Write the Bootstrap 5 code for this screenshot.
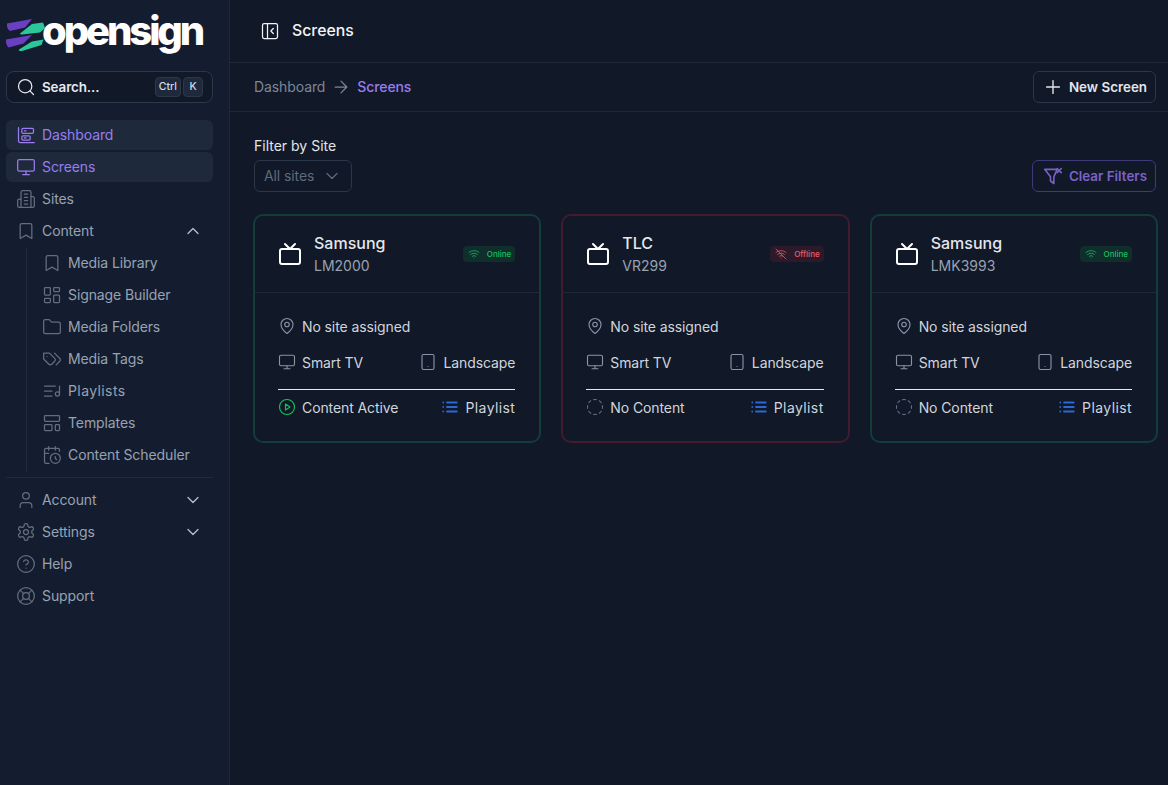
<!DOCTYPE html>
<html lang="en">
<head>
<meta charset="utf-8">
<title>Screens</title>
<link href="https://cdn.jsdelivr.net/npm/bootstrap@5.3.0/dist/css/bootstrap.min.css" rel="stylesheet">
<style>
html,body{height:100%}
body{background:#111827;font-family:"Inter","Noto Sans",sans-serif;font-size:14px;letter-spacing:-.1px;color:#e2e6ec;overflow:hidden}
svg.ico{fill:none;stroke:currentColor;stroke-width:1.5;stroke-linecap:round;stroke-linejoin:round;flex:none}
.shell{height:785px}
.side{width:230px;flex:none;background:#141d2f;border-right:1px solid #1f2937;padding:0 16px 0 6px}
.brand{height:71px;position:relative;color:#fff}
.brand-word{font-family:"Inter",sans-serif;font-weight:800;font-size:40px;letter-spacing:-3.1px;line-height:1;position:absolute;left:36px;top:11px}
.brand-mark{position:absolute;left:-6px;top:0}
.searchbox{height:32px;border:1px solid #2c3749;border-radius:8px;background:#111827;padding:0 9px;margin-bottom:17px;color:#e6e9ee;font-weight:600;font-size:13.4px;gap:6px}
.keyset{gap:2px}
.keycap{height:20px;border:1px solid #2c3749;background:#1e293b;border-radius:4px;font-size:10.5px;font-weight:500;letter-spacing:0;padding:0 3px;min-width:20px;color:#d5dae2;display:flex;align-items:center;justify-content:center}
.nav-row{height:30px;margin-bottom:2px;border-radius:6px;padding:0 10px;color:#98a2b3;gap:6px;font-size:14px}
.nav-row>svg:first-child{color:#626e80}
.nav-row.on{background:#1e293b;color:#9a7cf0}
.nav-row.on>svg:first-child{color:#9a7cf0}
.nav-row .txt{flex:1;margin-bottom:2px}
.nav-row .chev{color:#b8c0cc}
.subnav{margin-left:20px;border-left:1px solid #1f2a3a}
.subnav .nav-row{padding-left:15px}
.side-rule{height:1px;background:#1f2a3a;margin:5px 0 7px}
.mainpane{min-width:0}
.topbar{height:63px;border-bottom:1px solid #1f2937;padding-left:30px;gap:12px;color:#f2f4f7;font-size:15.8px;font-weight:500;letter-spacing:0}
.crumbs{height:49px;border-bottom:1px solid #1f2937;padding:0 12px 0 24px}
.crumb-a{color:#7d8798;margin-bottom:2px}
.crumb-b{color:#9a7cf0;font-weight:500;margin-bottom:2px}
.crumb-arrow{color:#7d8798;margin:0 6px}
.btn-ghost{height:32px;border:1px solid #2c3749;border-radius:6px;background:transparent;color:#e2e6ec;font-weight:600;font-size:13.4px;padding:0 8px 0 8px;gap:5px;display:inline-flex;align-items:center}
.btn-ghost.vio{color:#7c62c8;border-color:#3f3a78;padding-left:10px;gap:6px}
.btn-ghost.vio svg{stroke-width:1.9}
.content{padding:25px 12px 0 24px}
.filter-label{color:#e2e6ec;font-size:14px;letter-spacing:0;line-height:17px;margin-bottom:6px}
.picker{height:32px;width:98px;border:1px solid #2c3749;border-radius:6px;color:#5f6a7c;padding:0 9px;font-size:14px}
.picker span{margin-bottom:2px}
.screens{display:grid;grid-template-columns:repeat(3,1fr);gap:20px;margin:22px -2px 0 -1px}
.tile{background:transparent;border-width:2px;border-style:solid;border-radius:10px;color:#d5dae2;height:229px}
.tile.ok{border-color:#123d38}
.tile.bad{border-color:#431a2e}
.tile-head{height:77px;padding:0 24px 0 23px;border-bottom:1px solid #1b2a36;gap:12px;color:#fff}
.tile-name{font-size:16px;font-weight:500;letter-spacing:0;line-height:22px;color:#e4e7ec}
.tile-model{font-size:14px;letter-spacing:0;line-height:23px;color:#98a2b3}
.pill{height:16px;border-radius:4px;font-size:8px;font-weight:500;letter-spacing:0;padding:0 4px 0 5px;gap:7px;display:flex;align-items:center}
.pill.ok{background:#0f2e2c;color:#14c25f}
.pill.bad{background:#2c1a2a;color:#ef5a63}
.tile-body{padding:23px 24px 0 23px;font-size:14px;color:#d0d5dd}
.line{height:20px;margin-bottom:16px;color:#d0d5dd}
.line svg{color:#8a94a6}
.item{gap:6px}
.tile-rule{height:1px;background:#e4e7ec;margin:1px 0 7px}
.wide{letter-spacing:.4px}
.green{color:#14c25f!important}
.blue{color:#2a68d4!important;stroke-width:2.4!important}
.dim{color:#5f6a7c!important}
</style>
</head>
<body>
<svg width="0" height="0" class="position-absolute">
<defs>
<symbol id="i-dash" viewBox="0 0 24 24"><path d="M3 3v16a2 2 0 0 0 2 2h17"/><rect x="7" y="4" width="14" height="6" rx="1.5"/><rect x="7" y="13" width="10" height="5" rx="1.5"/><path d="M10 7h2M10 15.500h2"/></symbol>
<symbol id="i-mon" viewBox="0 0 24 24"><rect x="2" y="3" width="20" height="14" rx="2"/><path d="M8 21h8M12 17v4"/></symbol>
<symbol id="i-bld" viewBox="0 0 24 24"><path d="M6 22V4a2 2 0 0 1 2-2h8a2 2 0 0 1 2 2v18Z"/><path d="M6 12H4a2 2 0 0 0-2 2v6a2 2 0 0 0 2 2h2"/><path d="M18 9h2a2 2 0 0 1 2 2v9a2 2 0 0 1-2 2h-2"/><path d="M10 6h4M10 10h4M10 14h4M10 18h4"/></symbol>
<symbol id="i-book" viewBox="0 0 24 24"><path d="M19 21l-7-4-7 4V5a2 2 0 0 1 2-2h10a2 2 0 0 1 2 2z"/></symbol>
<symbol id="i-grid" viewBox="0 0 24 24"><rect x="3" y="3" width="7" height="9" rx="1"/><rect x="14" y="3" width="7" height="5" rx="1"/><rect x="14" y="12" width="7" height="9" rx="1"/><rect x="3" y="16" width="7" height="5" rx="1"/></symbol>
<symbol id="i-fold" viewBox="0 0 24 24"><path d="M20 20a2 2 0 0 0 2-2V8a2 2 0 0 0-2-2h-7.900a2 2 0 0 1-1.690-.9L9.600 3.900A2 2 0 0 0 7.930 3H4a2 2 0 0 0-2 2v13a2 2 0 0 0 2 2Z"/></symbol>
<symbol id="i-tags" viewBox="0 0 24 24"><path d="M9 5H2v7l6.290 6.290c.94.94 2.480.94 3.420 0l3.580-3.580c.94-.94.94-2.480 0-3.420L9 5Z"/><path d="M6 9.010V9"/><path d="m15 5 6.300 6.300a2.400 2.400 0 0 1 0 3.400L17 19"/></symbol>
<symbol id="i-lmus" viewBox="0 0 24 24"><path d="M21 15V6"/><path d="M18.500 18a2.500 2.500 0 1 0 0-5 2.500 2.500 0 0 0 0 5Z"/><path d="M12 12H3M16 6H3M12 18H3"/></symbol>
<symbol id="i-tmpl" viewBox="0 0 24 24"><rect x="3" y="3" width="18" height="7" rx="1"/><rect x="3" y="14" width="9" height="7" rx="1"/><rect x="16" y="14" width="5" height="7" rx="1"/></symbol>
<symbol id="i-cal" viewBox="0 0 24 24"><path d="M21 7.500V6a2 2 0 0 0-2-2H5a2 2 0 0 0-2 2v14a2 2 0 0 0 2 2h3.500"/><path d="M16 2v4M8 2v4M3 10h5"/><path d="M17.500 17.500 16 16.300V14"/><circle cx="16" cy="16" r="6"/></symbol>
<symbol id="i-user" viewBox="0 0 24 24"><path d="M19 21v-2a4 4 0 0 0-4-4H9a4 4 0 0 0-4 4v2"/><circle cx="12" cy="7" r="4"/></symbol>
<symbol id="i-gear" viewBox="0 0 24 24"><path d="M12.220 2h-.44a2 2 0 0 0-2 2v.18a2 2 0 0 1-1 1.730l-.43.25a2 2 0 0 1-2 0l-.15-.08a2 2 0 0 0-2.730.73l-.22.38a2 2 0 0 0 .73 2.730l.15.1a2 2 0 0 1 1 1.720v.51a2 2 0 0 1-1 1.740l-.15.09a2 2 0 0 0-.73 2.730l.22.38a2 2 0 0 0 2.730.73l.15-.08a2 2 0 0 1 2 0l.43.25a2 2 0 0 1 1 1.730V20a2 2 0 0 0 2 2h.44a2 2 0 0 0 2-2v-.18a2 2 0 0 1 1-1.730l.43-.25a2 2 0 0 1 2 0l.15.08a2 2 0 0 0 2.730-.73l.22-.39a2 2 0 0 0-.73-2.730l-.15-.08a2 2 0 0 1-1-1.740v-.5a2 2 0 0 1 1-1.740l.15-.09a2 2 0 0 0 .73-2.730l-.22-.38a2 2 0 0 0-2.730-.73l-.15.08a2 2 0 0 1-2 0l-.43-.25a2 2 0 0 1-1-1.730V4a2 2 0 0 0-2-2z"/><circle cx="12" cy="12" r="3"/></symbol>
<symbol id="i-help" viewBox="0 0 24 24"><circle cx="12" cy="12" r="10"/><path d="M9.090 9a3 3 0 0 1 5.830 1c0 2-3 3-3 3M12 17h.01"/></symbol>
<symbol id="i-buoy" viewBox="0 0 24 24"><circle cx="12" cy="12" r="10"/><circle cx="12" cy="12" r="4"/><path d="m4.930 4.930 4.240 4.240M14.830 9.170l4.240-4.240M14.830 14.830l4.240 4.240M9.170 14.830l-4.240 4.240"/></symbol>
<symbol id="i-up" viewBox="0 0 24 24"><path d="m18 15-6-6-6 6"/></symbol>
<symbol id="i-down" viewBox="0 0 24 24"><path d="m6 9 6 6 6-6"/></symbol>
<symbol id="i-tv" viewBox="0 0 24 24"><rect x="2" y="7" width="20" height="15" rx="2"/><path d="m17 2-5 5-5-5"/></symbol>
<symbol id="i-pin" viewBox="0 0 24 24"><path d="M20 10c0 6-8 12-8 12s-8-6-8-12a8 8 0 0 1 16 0Z"/><circle cx="12" cy="10" r="3"/></symbol>
<symbol id="i-tab" viewBox="0 0 24 24"><rect x="4" y="2" width="16" height="20" rx="2"/><path d="M12 18h.01"/></symbol>
<symbol id="i-play" viewBox="0 0 24 24"><circle cx="12" cy="12" r="10"/><path d="m10 8 6 4-6 4Z"/></symbol>
<symbol id="i-cdash" viewBox="0 0 24 24"><path d="M10.100 2.180a9.930 9.930 0 0 1 3.800 0M17.600 3.710a9.950 9.950 0 0 1 2.690 2.700M21.820 10.100a9.930 9.930 0 0 1 0 3.800M20.290 17.600a9.950 9.950 0 0 1-2.700 2.690M13.900 21.820a9.940 9.940 0 0 1-3.800 0M6.400 20.290a9.950 9.950 0 0 1-2.690-2.700M2.180 13.900a9.930 9.930 0 0 1 0-3.800M3.710 6.400a9.950 9.950 0 0 1 2.700-2.690"/></symbol>
<symbol id="i-list" viewBox="0 0 24 24"><path d="M8 6h13M8 12h13M8 18h13M3 6h.01M3 12h.01M3 18h.01"/></symbol>
<symbol id="i-wifi" viewBox="0 0 24 24"><path d="M5 13a10 10 0 0 1 14 0M8.500 16.500a5 5 0 0 1 7 0M2 8.820a15 15 0 0 1 20 0M12 20h.01"/></symbol>
<symbol id="i-wifix" viewBox="0 0 24 24"><path d="M12 20h.01M8.500 16.430a5 5 0 0 1 7 0M5 12.860a10 10 0 0 1 14 0M2 8.820a15 15 0 0 1 20 0M2 2l20 20"/></symbol>
<symbol id="i-panel" viewBox="0 0 24 24"><rect x="3" y="3" width="18" height="18" rx="2"/><path d="M9 3v18M16 15l-3-3 3-3"/></symbol>
<symbol id="i-search" viewBox="0 0 24 24"><circle cx="11" cy="11" r="8"/><path d="m21 21-4.300-4.300"/></symbol>
<symbol id="i-arrow" viewBox="0 0 24 24"><path d="M5 12h14M12 5l7 7-7 7"/></symbol>
<symbol id="i-plus" viewBox="0 0 24 24"><path d="M5 12h14M12 5v14"/></symbol>
<symbol id="i-fx" viewBox="0 0 24 24"><path d="M13 13v8l-4-3v-5L2 4h15l-4 9Z"/><path d="m17 3 5 5M22 3l-5 5"/></symbol>
</defs>
</svg>

<div class="shell d-flex">
  <aside class="side">
    <div class="brand">
      <svg class="brand-mark" width="46" height="54" viewBox="0 0 46 54"><path d="M7 23.500 32 19 25 27.500 10 31Q6.500 29 7 23.500Z" fill="#6b3fc4"/><path d="M20 33.500 32 24 43 22.500 45 28 40 32.500 22 34.500Q19.500 34.500 20 33.500Z" fill="#2bc79a"/><path d="M6 39.500 32 35 23.500 43.500 8.500 47.500Q5.500 44 6 39.500Z" fill="#6b3fc4"/><path d="M19 49.500 32 41.500 43.500 39.500 41.500 45 22 51Q18 51 19 49.500Z" fill="#2bc79a"/></svg>
      <div class="brand-word">opensign</div>
    </div>
    <div class="searchbox d-flex align-items-center">
      <svg class="ico" width="20" height="20"><use href="#i-search"/></svg>
      <span class="flex-grow-1">Search...</span>
      <span class="d-flex keyset"><span class="keycap">Ctrl</span><span class="keycap">K</span></span>
    </div>
    <div class="d-flex flex-column">
      <div class="nav-row on d-flex align-items-center"><svg class="ico" width="20" height="20"><use href="#i-dash"/></svg><span class="txt">Dashboard</span></div>
      <div class="nav-row on d-flex align-items-center"><svg class="ico" width="20" height="20"><use href="#i-mon"/></svg><span class="txt">Screens</span></div>
      <div class="nav-row d-flex align-items-center"><svg class="ico" width="20" height="20"><use href="#i-bld"/></svg><span class="txt">Sites</span></div>
      <div class="nav-row d-flex align-items-center"><svg class="ico" width="20" height="20"><use href="#i-book"/></svg><span class="txt">Content</span><svg class="ico chev" width="20" height="20"><use href="#i-up"/></svg></div>
      <div class="subnav">
        <div class="nav-row d-flex align-items-center"><svg class="ico" width="20" height="20"><use href="#i-book"/></svg><span class="txt">Media Library</span></div>
        <div class="nav-row d-flex align-items-center"><svg class="ico" width="20" height="20"><use href="#i-grid"/></svg><span class="txt">Signage Builder</span></div>
        <div class="nav-row d-flex align-items-center"><svg class="ico" width="20" height="20"><use href="#i-fold"/></svg><span class="txt">Media Folders</span></div>
        <div class="nav-row d-flex align-items-center"><svg class="ico" width="20" height="20"><use href="#i-tags"/></svg><span class="txt">Media Tags</span></div>
        <div class="nav-row d-flex align-items-center"><svg class="ico" width="20" height="20"><use href="#i-lmus"/></svg><span class="txt wide">Playlists</span></div>
        <div class="nav-row d-flex align-items-center"><svg class="ico" width="20" height="20"><use href="#i-tmpl"/></svg><span class="txt">Templates</span></div>
        <div class="nav-row d-flex align-items-center"><svg class="ico" width="20" height="20"><use href="#i-cal"/></svg><span class="txt">Content Scheduler</span></div>
      </div>
      <div class="side-rule"></div>
      <div class="nav-row d-flex align-items-center"><svg class="ico" width="20" height="20"><use href="#i-user"/></svg><span class="txt">Account</span><svg class="ico chev" width="20" height="20"><use href="#i-down"/></svg></div>
      <div class="nav-row d-flex align-items-center"><svg class="ico" width="20" height="20"><use href="#i-gear"/></svg><span class="txt">Settings</span><svg class="ico chev" width="20" height="20"><use href="#i-down"/></svg></div>
      <div class="nav-row d-flex align-items-center"><svg class="ico" width="20" height="20"><use href="#i-help"/></svg><span class="txt">Help</span></div>
      <div class="nav-row d-flex align-items-center"><svg class="ico" width="20" height="20"><use href="#i-buoy"/></svg><span class="txt">Support</span></div>
    </div>
  </aside>

  <main class="mainpane flex-grow-1 d-flex flex-column">
    <div class="topbar d-flex align-items-center"><svg class="ico" width="20" height="20"><use href="#i-panel"/></svg><span>Screens</span></div>
    <div class="crumbs d-flex align-items-center justify-content-between">
      <div class="d-flex align-items-center"><span class="crumb-a">Dashboard</span><svg class="ico crumb-arrow" width="20" height="20"><use href="#i-arrow"/></svg><span class="crumb-b">Screens</span></div>
      <button type="button" class="btn-ghost"><svg class="ico" width="22" height="22"><use href="#i-plus"/></svg>New Screen</button>
    </div>
    <div class="content">
      <div class="d-flex justify-content-between align-items-end">
        <div>
          <div class="filter-label">Filter by Site</div>
          <div class="picker d-flex align-items-center justify-content-between"><span>All sites</span><svg class="ico" width="20" height="20"><use href="#i-down"/></svg></div>
        </div>
        <button type="button" class="btn-ghost vio"><svg class="ico" width="20" height="20"><use href="#i-fx"/></svg>Clear Filters</button>
      </div>
      <div class="screens">
        <div class="tile ok">
          <div class="tile-head d-flex align-items-center"><svg class="ico" width="24" height="24" style="stroke-width:2"><use href="#i-tv"/></svg>
            <div class="flex-grow-1"><div class="tile-name">Samsung</div><div class="tile-model">LM2000</div></div>
            <div class="pill ok"><svg class="ico" width="12" height="12"><use href="#i-wifi"/></svg>Online</div></div>
          <div class="tile-body d-flex flex-column">
            <div class="line d-flex align-items-center item"><svg class="ico" width="18" height="18"><use href="#i-pin"/></svg>No site assigned</div>
            <div class="line d-flex align-items-center justify-content-between"><span class="item d-flex align-items-center"><svg class="ico" width="18" height="18"><use href="#i-mon"/></svg>Smart TV</span><span class="item d-flex align-items-center"><svg class="ico" width="18" height="18"><use href="#i-tab"/></svg>Landscape</span></div>
            <div class="tile-rule"></div>
            <div class="line d-flex align-items-center justify-content-between"><span class="item d-flex align-items-center"><svg class="ico green" width="18" height="18"><use href="#i-play"/></svg>Content Active</span><span class="item d-flex align-items-center wide"><svg class="ico blue" width="18" height="18"><use href="#i-list"/></svg>Playlist</span></div>
          </div>
        </div>
        <div class="tile bad">
          <div class="tile-head d-flex align-items-center"><svg class="ico" width="24" height="24" style="stroke-width:2"><use href="#i-tv"/></svg>
            <div class="flex-grow-1"><div class="tile-name">TLC</div><div class="tile-model">VR299</div></div>
            <div class="pill bad"><svg class="ico" width="12" height="12"><use href="#i-wifix"/></svg>Offline</div></div>
          <div class="tile-body d-flex flex-column">
            <div class="line d-flex align-items-center item"><svg class="ico" width="18" height="18"><use href="#i-pin"/></svg>No site assigned</div>
            <div class="line d-flex align-items-center justify-content-between"><span class="item d-flex align-items-center"><svg class="ico" width="18" height="18"><use href="#i-mon"/></svg>Smart TV</span><span class="item d-flex align-items-center"><svg class="ico" width="18" height="18"><use href="#i-tab"/></svg>Landscape</span></div>
            <div class="tile-rule"></div>
            <div class="line d-flex align-items-center justify-content-between"><span class="item d-flex align-items-center"><svg class="ico dim" width="18" height="18"><use href="#i-cdash"/></svg>No Content</span><span class="item d-flex align-items-center wide"><svg class="ico blue" width="18" height="18"><use href="#i-list"/></svg>Playlist</span></div>
          </div>
        </div>
        <div class="tile ok">
          <div class="tile-head d-flex align-items-center"><svg class="ico" width="24" height="24" style="stroke-width:2"><use href="#i-tv"/></svg>
            <div class="flex-grow-1"><div class="tile-name">Samsung</div><div class="tile-model">LMK3993</div></div>
            <div class="pill ok"><svg class="ico" width="12" height="12"><use href="#i-wifi"/></svg>Online</div></div>
          <div class="tile-body d-flex flex-column">
            <div class="line d-flex align-items-center item"><svg class="ico" width="18" height="18"><use href="#i-pin"/></svg>No site assigned</div>
            <div class="line d-flex align-items-center justify-content-between"><span class="item d-flex align-items-center"><svg class="ico" width="18" height="18"><use href="#i-mon"/></svg>Smart TV</span><span class="item d-flex align-items-center"><svg class="ico" width="18" height="18"><use href="#i-tab"/></svg>Landscape</span></div>
            <div class="tile-rule"></div>
            <div class="line d-flex align-items-center justify-content-between"><span class="item d-flex align-items-center"><svg class="ico dim" width="18" height="18"><use href="#i-cdash"/></svg>No Content</span><span class="item d-flex align-items-center wide"><svg class="ico blue" width="18" height="18"><use href="#i-list"/></svg>Playlist</span></div>
          </div>
        </div>
      </div>
    </div>
  </main>
</div>
<script src="https://cdn.jsdelivr.net/npm/bootstrap@5.3.0/dist/js/bootstrap.bundle.min.js"></script>
</body>
</html>
